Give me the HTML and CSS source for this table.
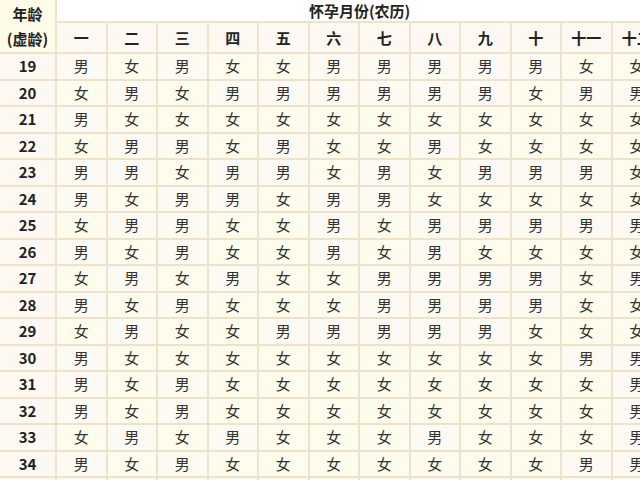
FILE: index.html
```html
<!DOCTYPE html>
<html lang="zh">
<head>
<meta charset="utf-8">
<link rel="stylesheet" href="styles.css">
</head>
<body>
<div class="wrap">
<table class="chart">
<colgroup><col class="c-age"><col span="12" class="c-mon"></colgroup>
<thead>
<tr class="h1"><th rowspan="2" class="corner">年龄<br>(虚龄)</th><th colspan="12" class="title">怀孕月份(农历)</th></tr>
<tr class="h2"><th>一</th><th>二</th><th>三</th><th>四</th><th>五</th><th>六</th><th>七</th><th>八</th><th>九</th><th>十</th><th>十一</th><th>十二</th></tr>
</thead>
<tbody id="rows">
<tr><th>19</th><td class="m">男</td><td class="f">女</td><td class="m">男</td><td class="f">女</td><td class="f">女</td><td class="m">男</td><td class="m">男</td><td class="m">男</td><td class="m">男</td><td class="m">男</td><td class="f">女</td><td class="f">女</td></tr>
<tr><th>20</th><td class="f">女</td><td class="m">男</td><td class="f">女</td><td class="m">男</td><td class="m">男</td><td class="m">男</td><td class="m">男</td><td class="m">男</td><td class="m">男</td><td class="f">女</td><td class="m">男</td><td class="m">男</td></tr>
<tr><th>21</th><td class="m">男</td><td class="f">女</td><td class="f">女</td><td class="f">女</td><td class="f">女</td><td class="f">女</td><td class="f">女</td><td class="f">女</td><td class="f">女</td><td class="f">女</td><td class="f">女</td><td class="f">女</td></tr>
<tr><th>22</th><td class="f">女</td><td class="m">男</td><td class="m">男</td><td class="f">女</td><td class="m">男</td><td class="f">女</td><td class="f">女</td><td class="m">男</td><td class="f">女</td><td class="f">女</td><td class="f">女</td><td class="f">女</td></tr>
<tr><th>23</th><td class="m">男</td><td class="m">男</td><td class="f">女</td><td class="m">男</td><td class="m">男</td><td class="f">女</td><td class="m">男</td><td class="f">女</td><td class="m">男</td><td class="m">男</td><td class="m">男</td><td class="f">女</td></tr>
<tr><th>24</th><td class="m">男</td><td class="f">女</td><td class="m">男</td><td class="m">男</td><td class="f">女</td><td class="m">男</td><td class="m">男</td><td class="f">女</td><td class="f">女</td><td class="f">女</td><td class="f">女</td><td class="f">女</td></tr>
<tr><th>25</th><td class="f">女</td><td class="m">男</td><td class="m">男</td><td class="f">女</td><td class="f">女</td><td class="m">男</td><td class="f">女</td><td class="m">男</td><td class="m">男</td><td class="m">男</td><td class="m">男</td><td class="m">男</td></tr>
<tr><th>26</th><td class="m">男</td><td class="f">女</td><td class="m">男</td><td class="f">女</td><td class="f">女</td><td class="m">男</td><td class="f">女</td><td class="m">男</td><td class="f">女</td><td class="f">女</td><td class="f">女</td><td class="f">女</td></tr>
<tr><th>27</th><td class="f">女</td><td class="m">男</td><td class="f">女</td><td class="m">男</td><td class="f">女</td><td class="f">女</td><td class="m">男</td><td class="m">男</td><td class="m">男</td><td class="m">男</td><td class="f">女</td><td class="m">男</td></tr>
<tr><th>28</th><td class="m">男</td><td class="f">女</td><td class="m">男</td><td class="f">女</td><td class="f">女</td><td class="f">女</td><td class="m">男</td><td class="m">男</td><td class="m">男</td><td class="m">男</td><td class="f">女</td><td class="f">女</td></tr>
<tr><th>29</th><td class="f">女</td><td class="m">男</td><td class="f">女</td><td class="f">女</td><td class="m">男</td><td class="m">男</td><td class="m">男</td><td class="m">男</td><td class="m">男</td><td class="f">女</td><td class="f">女</td><td class="f">女</td></tr>
<tr><th>30</th><td class="m">男</td><td class="f">女</td><td class="f">女</td><td class="f">女</td><td class="f">女</td><td class="f">女</td><td class="f">女</td><td class="f">女</td><td class="f">女</td><td class="f">女</td><td class="m">男</td><td class="m">男</td></tr>
<tr><th>31</th><td class="m">男</td><td class="f">女</td><td class="m">男</td><td class="f">女</td><td class="f">女</td><td class="f">女</td><td class="f">女</td><td class="f">女</td><td class="f">女</td><td class="f">女</td><td class="f">女</td><td class="m">男</td></tr>
<tr><th>32</th><td class="m">男</td><td class="f">女</td><td class="m">男</td><td class="f">女</td><td class="f">女</td><td class="f">女</td><td class="f">女</td><td class="f">女</td><td class="f">女</td><td class="f">女</td><td class="f">女</td><td class="m">男</td></tr>
<tr><th>33</th><td class="f">女</td><td class="m">男</td><td class="f">女</td><td class="m">男</td><td class="f">女</td><td class="f">女</td><td class="f">女</td><td class="m">男</td><td class="f">女</td><td class="f">女</td><td class="f">女</td><td class="m">男</td></tr>
<tr><th>34</th><td class="m">男</td><td class="f">女</td><td class="m">男</td><td class="f">女</td><td class="f">女</td><td class="f">女</td><td class="f">女</td><td class="f">女</td><td class="f">女</td><td class="f">女</td><td class="m">男</td><td class="m">男</td></tr>
<tr><th>35</th><td class="m">男</td><td class="m">男</td><td class="f">女</td><td class="m">男</td><td class="f">女</td><td class="f">女</td><td class="f">女</td><td class="m">男</td><td class="f">女</td><td class="f">女</td><td class="m">男</td><td class="m">男</td></tr>
</tbody>
</table>
</div>
</body>
</html>
```
FILE: styles.css
```css
html, body {
  margin: 0;
  padding: 0;
  background: #ffffff;
}
.wrap {
  width: 640px;
  height: 480px;
  overflow: hidden;
}
.chart {
  border-collapse: collapse;
  table-layout: fixed;
  width: 662px;
  font-family: "Noto Sans CJK SC", "Noto Sans", sans-serif;
  font-size: 15px;
  color: #333333;
}
.c-age { width: 56px; }
.c-mon { width: 50.5px; }
.chart th, .chart td {
  border: 2px solid #eee2cb;
  padding: 0;
  text-align: center;
  vertical-align: middle;
  line-height: 20px;
}
.chart th {
  font-weight: bold;
  color: #222222;
  background: #fdf9f2;
}
.chart .corner {
  background: #fefbe8;
  line-height: 25px;
  border-top: none;
  border-left: none;
}
.chart .title {
  background: #ffffff;
  border-top: none;
  border-right: none;
  height: 21px;
}
.h2 th { height: 29px; }
.chart tbody th { border-left: none; }
.chart tbody tr { height: 26.5px; }
.chart td.m { background: #fdf9f3; }
.chart td.f { background: #fefded; }
```
